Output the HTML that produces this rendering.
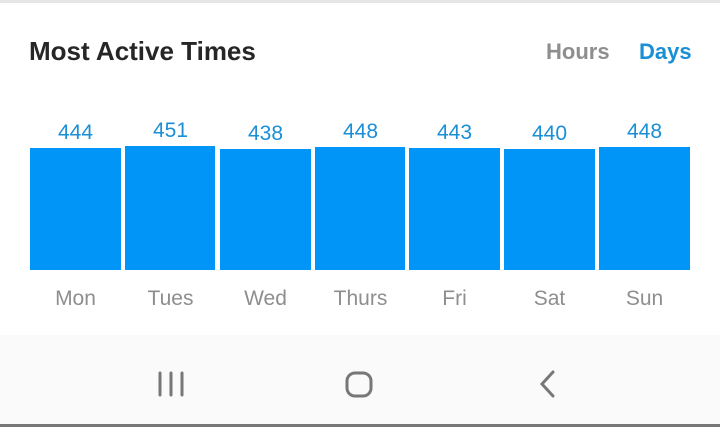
<!DOCTYPE html>
<html><head><style>
body{margin:0;width:720px;height:427px;background:#fff;font-family:"Liberation Sans",sans-serif;position:relative;overflow:hidden}
.a{position:absolute}
.bar{position:absolute;background:#0095f6}
.v{position:absolute;color:#1a8fd6;font-size:21px;width:91px;text-align:center}
.d{position:absolute;color:#8e8e8e;font-size:21px;width:91px;text-align:center;top:287px}
</style></head><body>
<div class="a" style="top:0;left:0;width:720px;height:3px;background:#e6e6e6"></div>
<div class="a" style="left:29px;top:36px;font-size:26px;font-weight:bold;color:#262626">Most Active Times</div>
<div class="a" style="left:546px;top:39px;font-size:22px;font-weight:bold;color:#8e8e8e">Hours</div>
<div class="a" style="left:639px;top:39px;font-size:22px;font-weight:bold;color:#1a8fd6">Days</div>

<div class="bar" style="left:30px;width:91px;top:148px;height:122px"></div>
<div class="bar" style="left:125px;width:90px;top:146px;height:124px"></div>
<div class="bar" style="left:220px;width:91px;top:149px;height:121px"></div>
<div class="bar" style="left:315px;width:90px;top:147px;height:123px"></div>
<div class="bar" style="left:409px;width:91px;top:148px;height:122px"></div>
<div class="bar" style="left:504px;width:91px;top:149px;height:121px"></div>
<div class="bar" style="left:599px;width:91px;top:147px;height:123px"></div>

<div class="v" style="left:30px;top:121px">444</div>
<div class="v" style="left:125px;top:119px">451</div>
<div class="v" style="left:220px;top:122px">438</div>
<div class="v" style="left:315px;top:120px">448</div>
<div class="v" style="left:409px;top:121px">443</div>
<div class="v" style="left:504px;top:122px">440</div>
<div class="v" style="left:599px;top:120px">448</div>

<div class="d" style="left:30px">Mon</div>
<div class="d" style="left:125px">Tues</div>
<div class="d" style="left:220px">Wed</div>
<div class="d" style="left:315px">Thurs</div>
<div class="d" style="left:409px">Fri</div>
<div class="d" style="left:504px">Sat</div>
<div class="d" style="left:599px">Sun</div>

<div class="a" style="left:0;top:335px;width:720px;height:89px;background:#fafafa"></div>
<div class="a" style="left:0;top:424px;width:720px;height:3px;background:#777"></div>
<svg class="a" style="left:0;top:335px" width="720" height="89">
<g stroke="#777" stroke-width="3" fill="none" stroke-linecap="round">
<line x1="160" y1="38" x2="160" y2="60"/><line x1="171" y1="38" x2="171" y2="60"/><line x1="182" y1="38" x2="182" y2="60"/>
<rect x="347" y="38" width="24" height="23" rx="8"/>
<polyline points="553,37 542,49 553,61"/>
</g></svg>
</body></html>
